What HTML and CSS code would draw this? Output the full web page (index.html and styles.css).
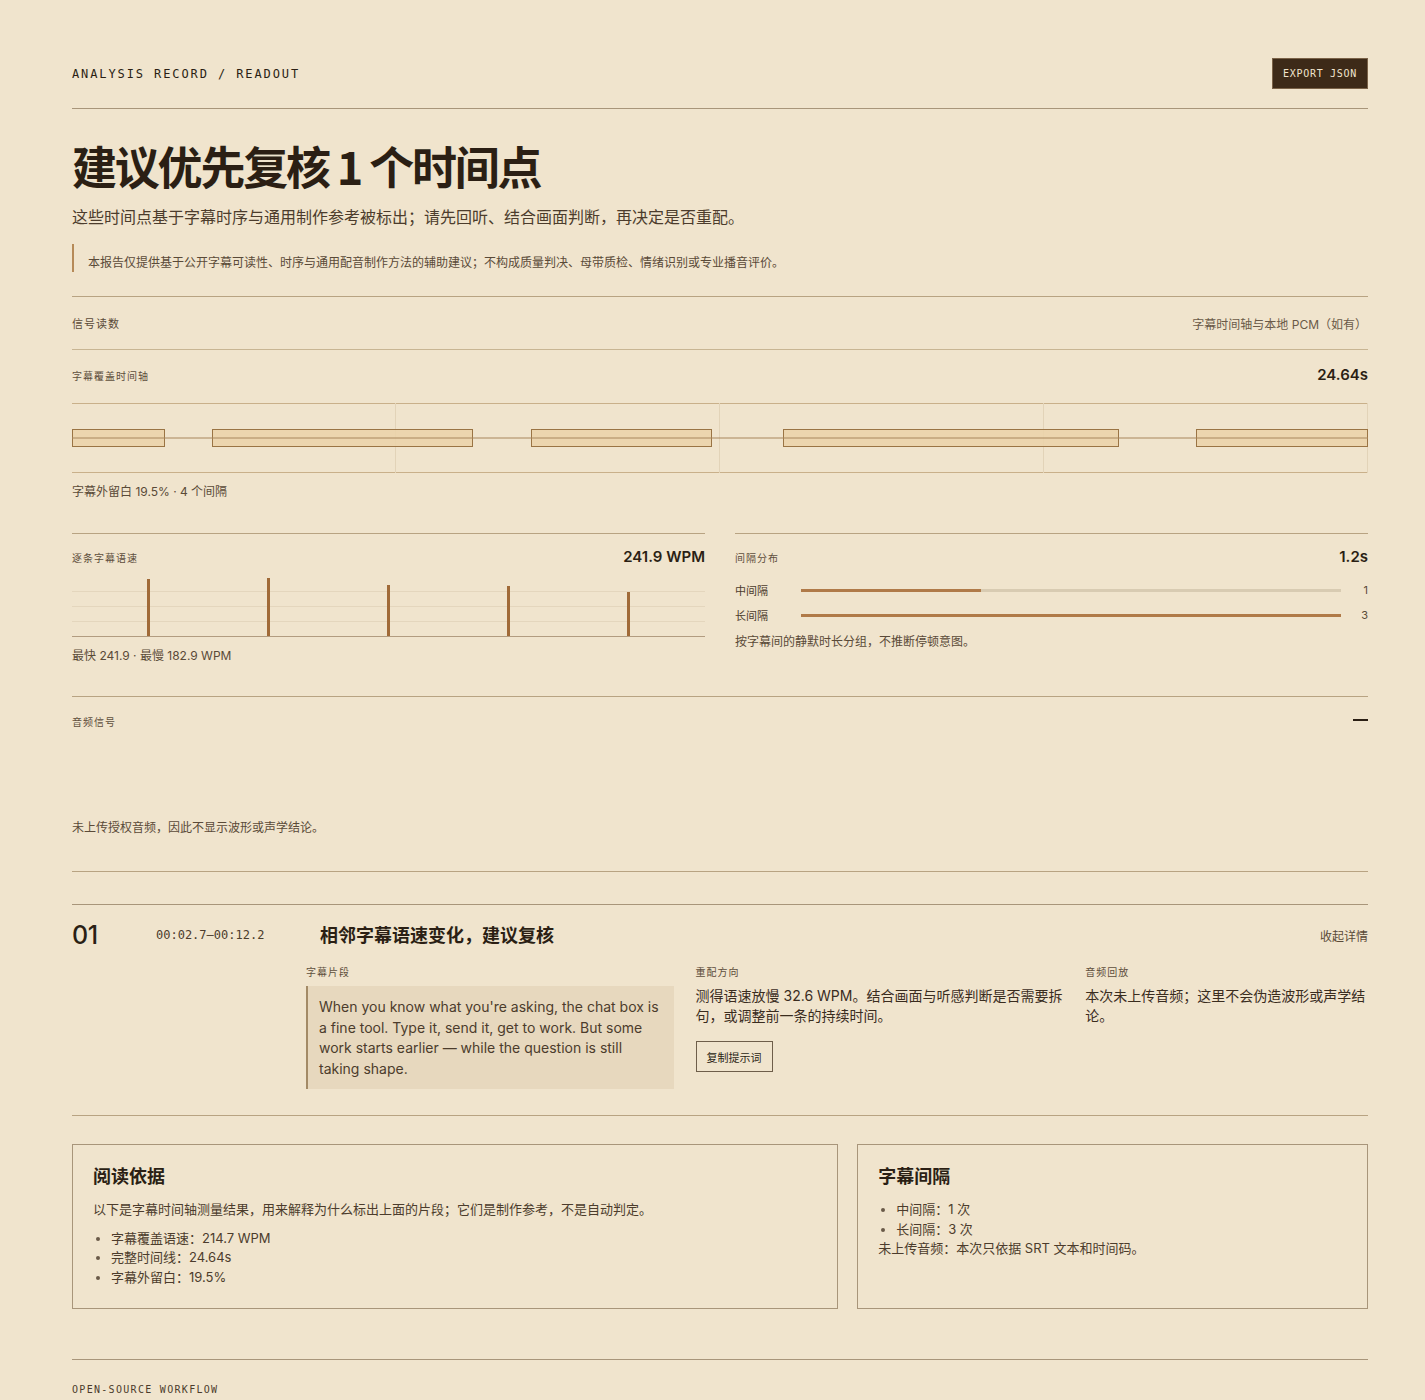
FILE: index.html
```html
<!DOCTYPE html>
<html lang="zh-CN">
<head>
<meta charset="utf-8">
<title>Analysis Record / Readout</title>
<link rel="stylesheet" href="styles.css">
</head>
<body>
<div class="page">
  <header class="top">
    <div class="crumb">ANALYSIS RECORD / READOUT</div>
    <button class="export">EXPORT JSON</button>
  </header>

  <section class="intro">
    <h1 class="title">建议优先复核 1 个时间点</h1>
    <p class="lead">这些时间点基于字幕时序与通用制作参考被标出；请先回听、结合画面判断，再决定是否重配。</p>
    <p class="note">本报告仅提供基于公开字幕可读性、时序与通用配音制作方法的辅助建议；不构成质量判决、母带质检、情绪识别或专业播音评价。</p>
  </section>

  <div class="signals-head">
    <span class="label-lg">信号读数</span>
    <span class="meta">字幕时间轴与本地 PCM（如有）</span>
  </div>

  <section class="coverage">
    <div class="row-head">
      <span class="label">字幕覆盖时间轴</span>
      <span class="value">24.64s</span>
    </div>
    <svg class="timeline" width="1296" height="70" viewBox="0 0 1296 70">
      <line x1="0" y1="0.5" x2="1296" y2="0.5" class="tl-edge"/>
      <line x1="0" y1="69.5" x2="1296" y2="69.5" class="tl-edge"/>
      <line x1="323.5" y1="0" x2="323.5" y2="70" class="tl-grid"/>
      <line x1="647.5" y1="0" x2="647.5" y2="70" class="tl-grid"/>
      <line x1="971.5" y1="0" x2="971.5" y2="70" class="tl-grid"/>
      <line x1="1295.5" y1="0" x2="1295.5" y2="70" class="tl-grid"/>
      <rect x="0.5" y="26.5" width="92" height="17" class="tl-bar"/>
      <rect x="140.5" y="26.5" width="260" height="17" class="tl-bar"/>
      <rect x="459.5" y="26.5" width="180" height="17" class="tl-bar"/>
      <rect x="711.5" y="26.5" width="335" height="17" class="tl-bar"/>
      <rect x="1124.5" y="26.5" width="171" height="17" class="tl-bar"/>
      <line x1="0" y1="35" x2="1296" y2="35" class="tl-axis"/>
    </svg>
    <p class="caption">字幕外留白 19.5% · 4 个间隔</p>
  </section>

  <section class="split">
    <div class="panel">
      <div class="row-head">
        <span class="label">逐条字幕语速</span>
        <span class="value">241.9 WPM</span>
      </div>
      <svg class="wpm" width="633" height="60" viewBox="0 0 633 60">
        <line x1="0" y1="14.5" x2="633" y2="14.5" class="wpm-grid"/>
        <line x1="0" y1="29.5" x2="633" y2="29.5" class="wpm-grid"/>
        <line x1="0" y1="44.5" x2="633" y2="44.5" class="wpm-grid"/>
        <rect x="75" y="2" width="3" height="57" class="wpm-bar"/>
        <rect x="195" y="1" width="3" height="58" class="wpm-bar"/>
        <rect x="315" y="8" width="3" height="51" class="wpm-bar"/>
        <rect x="435" y="9" width="3" height="50" class="wpm-bar"/>
        <rect x="555" y="15" width="3" height="44" class="wpm-bar"/>
        <line x1="0" y1="59.5" x2="633" y2="59.5" class="wpm-base"/>
      </svg>
      <p class="caption">最快 241.9 · 最慢 182.9 WPM</p>
    </div>
    <div class="panel">
      <div class="row-head">
        <span class="label">间隔分布</span>
        <span class="value">1.2s</span>
      </div>
      <div class="gaps">
        <div class="gap-row">
          <span class="gap-name">中间隔</span>
          <span class="gap-track"><span class="gap-fill" style="width:33.3%"></span></span>
          <span class="gap-count">1</span>
        </div>
        <div class="gap-row">
          <span class="gap-name">长间隔</span>
          <span class="gap-track"><span class="gap-fill" style="width:100%"></span></span>
          <span class="gap-count">3</span>
        </div>
      </div>
      <p class="caption">按字幕间的静默时长分组，不推断停顿意图。</p>
    </div>
  </section>

  <section class="audio">
    <div class="row-head">
      <span class="label">音频信号</span>
      <span class="collapse" aria-label="collapse"></span>
    </div>
    <p class="caption audio-text">未上传授权音频，因此不显示波形或声学结论。</p>
  </section>

  <article class="item">
    <div class="item-head">
      <span class="item-no">01</span>
      <span class="item-time">00:02.7–00:12.2</span>
      <h2 class="item-title">相邻字幕语速变化，建议复核</h2>
      <span class="item-toggle">收起详情</span>
    </div>
    <div class="item-body">
      <div class="col">
        <div class="label">字幕片段</div>
        <blockquote class="quote">When you know what you're asking, the chat box is a fine tool. Type it, send it, get to work. But some work starts earlier — while the question is still taking shape.</blockquote>
      </div>
      <div class="col">
        <div class="label">重配方向</div>
        <p class="body-text">测得语速放慢 32.6 WPM。结合画面与听感判断是否需要拆句，或调整前一条的持续时间。</p>
        <button class="copy">复制提示词</button>
      </div>
      <div class="col">
        <div class="label">音频回放</div>
        <p class="body-text">本次未上传音频；这里不会伪造波形或声学结论。</p>
      </div>
    </div>
  </article>

  <section class="cards">
    <div class="card">
      <h3 class="card-title">阅读依据</h3>
      <p class="card-text">以下是字幕时间轴测量结果，用来解释为什么标出上面的片段；它们是制作参考，不是自动判定。</p>
      <ul class="card-list">
        <li>字幕覆盖语速：214.7 WPM</li>
        <li>完整时间线：24.64s</li>
        <li>字幕外留白：19.5%</li>
      </ul>
    </div>
    <div class="card">
      <h3 class="card-title">字幕间隔</h3>
      <ul class="card-list tight">
        <li>中间隔：1 次</li>
        <li>长间隔：3 次</li>
      </ul>
      <p class="card-text plain">未上传音频：本次只依据 SRT 文本和时间码。</p>
    </div>
  </section>

  <footer class="foot">OPEN-SOURCE WORKFLOW</footer>
</div>
</body>
</html>
```

FILE: styles.css
```css
* { box-sizing: border-box; }
html, body { margin: 0; padding: 0; }
body {
  background: #f0e4cd;
  color: #2b1f14;
  font-family: Inter, "Noto Sans CJK SC", sans-serif;
}
.page {
  padding: 58px 57px 0 72px;
  width: 1425px;
  min-height: 1400px;
}
p { margin: 0; }

.top {
  display: flex;
  justify-content: space-between;
  align-items: center;
  padding-bottom: 19px;
  border-bottom: 1px solid #a8957a;
}
.crumb {
  font-family: "DejaVu Sans Mono", monospace;
  font-size: 12px;
  letter-spacing: 1.9px;
  color: #2b1f14;
}
.export {
  font-family: "DejaVu Sans Mono", monospace;
  font-size: 10px;
  letter-spacing: 0.7px;
  height: 31px;
  padding: 0 10px;
  background: #3d2a18;
  color: #f0e4cd;
  border: 1px solid #7a6247;
  border-radius: 0;
}

.intro {
  padding: 27px 0 24px;
  border-bottom: 1px solid #b8a382;
}
.title {
  margin: 0;
  font-family: "Noto Sans CJK SC", sans-serif;
  font-size: 45px;
  font-weight: 700;
  line-height: 60px;
  letter-spacing: -2.2px;
  color: #2b1f14;
}
.lead {
  margin-top: 9px;
  font-size: 16px;
  line-height: 24px;
  color: #4c3c2c;
}
.note {
  margin-top: 15px;
  padding: 10px 0 0 14px;
  border-left: 2px solid #b68a58;
  font-size: 12px;
  line-height: 18px;
  color: #5a4a38;
}

.signals-head {
  height: 53px;
  display: flex;
  justify-content: space-between;
  align-items: center;
  border-bottom: 1px solid #c8b593;
  padding-right: 1px;
}
.label-lg {
  font-size: 11px;
  letter-spacing: 1px;
  color: #5a4a38;
}
.meta {
  font-size: 12px;
  color: #6a5a48;
}

.row-head {
  display: flex;
  justify-content: space-between;
  align-items: center;
  height: 20px;
}
.label {
  font-size: 10px;
  letter-spacing: 1px;
  color: #5e4e3c;
  line-height: 14px;
}
.value {
  font-size: 15px;
  font-weight: 600;
  color: #2b1f14;
  margin-top: -3px;
}

.coverage {
  padding-top: 16px;
}
.timeline {
  display: block;
  margin-top: 17px;
}
.tl-edge { stroke: #c9b08a; stroke-width: 1; }
.tl-grid { stroke: #e2d3b8; stroke-width: 1; }
.tl-bar { fill: #ebd2a8; fill-opacity: 0.85; stroke: #9a7444; stroke-width: 1; }
.tl-axis { stroke: #a8865c; stroke-width: 1; }
.caption {
  font-size: 12px;
  line-height: 18px;
  color: #5a4a38;
}
.coverage .caption { margin-top: 10px; }

.split {
  margin-top: 32px;
  display: grid;
  grid-template-columns: 1fr 1fr;
  column-gap: 30px;
}
.panel {
  border-top: 1px solid #b8a382;
  padding-top: 14px;
  height: 163px;
}
.wpm {
  display: block;
  margin-top: 9px;
}
.wpm-grid { stroke: #e4d6bd; stroke-width: 1; }
.wpm-base { stroke: #b29c80; stroke-width: 1; }
.wpm-bar { fill: #a06a38; }
.panel .caption { margin-top: 10px; }

.gaps {
  margin-top: 14px;
  display: flex;
  flex-direction: column;
  gap: 9px;
}
.gap-row {
  display: grid;
  grid-template-columns: 66px 1fr 27px;
  align-items: center;
  height: 16px;
}
.gap-name {
  font-size: 11px;
  color: #4c3c2c;
}
.gap-track {
  display: block;
  height: 3px;
  background: #d8cbb2;
}
.gap-fill {
  display: block;
  height: 3px;
  background: #b07a48;
}
.gap-count {
  text-align: right;
  font-size: 11px;
  color: #5a4a38;
}
.panel .gaps + .caption { margin-top: 10px; }

.audio {
  border-top: 1px solid #b8a382;
  border-bottom: 1px solid #b8a382;
  padding-top: 15px;
  height: 176px;
}
.collapse {
  display: block;
  width: 15px;
  height: 2px;
  background: #2b1f14;
  margin-top: -4px;
}
.audio-text { margin-top: 87px; }

.item {
  margin-top: 32px;
  border-top: 1px solid #a8957a;
  border-bottom: 1px solid #b8a382;
  padding: 15px 0 26px;
}
.item-head {
  display: grid;
  grid-template-columns: 84px 164px 1fr auto;
  align-items: center;
  height: 26px;
}
.item-no {
  font-size: 25px;
  font-weight: 500;
  color: #2b1f14;
  letter-spacing: -0.5px;
}
.item-time {
  font-family: "DejaVu Sans Mono", monospace;
  font-size: 12px;
  color: #4c3c2c;
}
.item-title {
  margin: 0;
  font-family: "Noto Sans CJK SC", sans-serif;
  font-size: 18px;
  font-weight: 700;
  color: #2b1f14;
  margin-top: -2px;
}
.item-toggle {
  font-size: 12px;
  color: #5a4a38;
}
.item-body {
  margin: 19px 0 0 234px;
  display: grid;
  grid-template-columns: 1.3fr 1.3fr 1fr;
  column-gap: 22px;
}
.col .label { margin-bottom: 7px; }
.quote {
  margin: 0;
  background: #e7d8be;
  border-left: 2px solid #a38a66;
  padding: 11px 12px 10px 11px;
  font-size: 14px;
  line-height: 20.5px;
  color: #4c3c2c;
}
.body-text {
  font-size: 14px;
  line-height: 20px;
  color: #3a2c1e;
  margin-top: 1px;
}
.copy {
  margin-top: 15px;
  height: 31px;
  padding: 0 10px;
  background: transparent;
  border: 1px solid #6e5e4a;
  border-radius: 0;
  font-family: "Noto Sans CJK SC", sans-serif;
  font-size: 11px;
  color: #2b1f14;
}

.cards {
  margin-top: 28px;
  display: grid;
  grid-template-columns: 1.5fr 1fr;
  column-gap: 19px;
}
.card {
  border: 1px solid #a8957a;
  height: 165px;
  padding: 17px 20px;
}
.card-title {
  margin: 0;
  font-family: "Noto Sans CJK SC", sans-serif;
  font-size: 18px;
  font-weight: 700;
  line-height: 26px;
  color: #2b1f14;
}
.card-text {
  margin-top: 12px;
  font-size: 13px;
  line-height: 19.5px;
  color: #4c3c2c;
}
.card-text.plain { margin-top: 0; }
.card-list {
  margin: 9px 0 0;
  padding-left: 18px;
  font-size: 13px;
  line-height: 19.5px;
  color: #4c3c2c;
}
.card-list li { height: 19.5px; }
.card-list li::marker { color: #6a5a48; font-size: 13px; }
.card-list.tight { margin-top: 12px; }

.foot {
  margin-top: 50px;
  border-top: 1px solid #a8957a;
  padding-top: 24px;
  font-family: "DejaVu Sans Mono", monospace;
  font-size: 10px;
  letter-spacing: 1.3px;
  color: #4c3c2c;
}
```
